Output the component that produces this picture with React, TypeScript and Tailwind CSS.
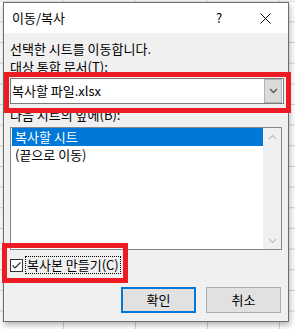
import React from "react";

const sheets = [
  { label: "복사할 시트", selected: true },
  { label: "(끝으로 이동)", selected: false },
];

function CloseIcon() {
  return (
    <svg width="11" height="11" viewBox="0 0 11 11">
      <path d="M0.5 0.5 L10.5 10.5 M10.5 0.5 L0.5 10.5" stroke="#000" strokeWidth="1" />
    </svg>
  );
}

function Chevron({ up = false, color }: { up?: boolean; color: string }) {
  return (
    <svg width="9" height="6" viewBox="0 0 9 6">
      <path
        d={up ? "M1 5 L4.5 1.5 L8 5" : "M1 1 L4.5 4.5 L8 1"}
        fill="none"
        stroke={color}
        strokeWidth="1.3"
      />
    </svg>
  );
}

export default function App() {
  return (
    <div className="relative w-[295px] h-[329px] overflow-hidden bg-white bg-[linear-gradient(to_right,#d4d4d4_1px,transparent_1px),linear-gradient(to_bottom,#d4d4d4_1px,transparent_1px)] bg-size-[72px_20.67px] bg-position-[63px_0.7px] font-['Noto_Sans_CJK_KR',sans-serif] text-[13px] text-black">
      <div className="ml-[3px] mt-[2px] w-[286px] h-[320px] border border-[#6f6f6f] bg-[#f0f0f0] shadow-[1px_3px_6px_rgba(0,0,0,0.3)] flex flex-col">
        {/* title bar */}
        <div className="h-[30px] bg-white flex items-center pl-[8px] shrink-0">
          <span className="flex-1 leading-[18px]">이동/복사</span>
          <span className="w-[46px] text-center leading-[18px]">?</span>
          <span className="w-[46px] flex justify-center">
            <CloseIcon />
          </span>
        </div>

        {/* body */}
        <div className="flex flex-col px-[6px] pt-[7px] leading-[18px]">
          <p>선택한 시트를 이동합니다.</p>
          <p>대상 통합 문서(T):</p>

          <div className="mt-[2px] w-[274px] h-[26px] border border-[#7a7a7a] bg-white flex items-center">
            <span className="flex-1 pl-[1px]">복사할 파일.xlsx</span>
            <span className="w-[18px] h-[24px] mr-[1px] bg-[#dadada] border border-[#b4b4b4] flex items-center justify-center">
              <Chevron color="#555" />
            </span>
          </div>

          <p className="mt-[2px]">다음 시트의 앞에(B):</p>

          <div className="mt-[3px] h-[123px] border border-[#828790] bg-white flex">
            <div className="flex-1 pl-[1px]">
              {sheets.map((s) => (
                <div
                  key={s.label}
                  className={
                    s.selected
                      ? "h-[18px] pl-[3px] leading-[17px] bg-[#0078d7] text-white"
                      : "h-[18px] pl-[3px] leading-[17px]"
                  }
                >
                  {s.label}
                </div>
              ))}
            </div>
            <div className="w-[18px] bg-[#f0f0f0] flex flex-col justify-between">
              <div className="h-[17px] flex items-center justify-center">
                <Chevron up color="#c2c2c2" />
              </div>
              <div className="h-[17px] flex items-center justify-center">
                <Chevron color="#c2c2c2" />
              </div>
            </div>
          </div>

          <div className="mt-[6px] h-[18px] flex items-center">
            <span className="w-[13px] h-[13px] border border-[#333] bg-white flex items-center justify-center">
              <svg width="11" height="11" viewBox="0 0 11 11">
                <path d="M1.5 5.5 L4 8 L9.5 2.5" fill="none" stroke="#333" strokeWidth="1.2" />
              </svg>
            </span>
            <span className="ml-[2px] h-[18px] px-[1px] border border-dotted border-black leading-[16px]">
              복사본 만들기(C)
            </span>
          </div>

          <div className="mt-[13px] mr-[1px] flex justify-end gap-[10px]">
            <button className="w-[75px] h-[26px] border-2 border-[#0078d7] bg-[#e1e1e1] leading-[18px]">
              확인
            </button>
            <button className="w-[75px] h-[26px] border border-[#adadad] bg-[#e1e1e1] leading-[18px]">
              취소
            </button>
          </div>
        </div>
      </div>

      {/* annotation boxes */}
      <div className="absolute left-[4px] top-[72px] w-[287px] h-[41px] border-[5px] border-[#ed1c24]" />
      <div className="absolute left-[2px] top-[243px] w-[126px] h-[40px] border-[5px] border-[#ed1c24]" />
    </div>
  );
}
